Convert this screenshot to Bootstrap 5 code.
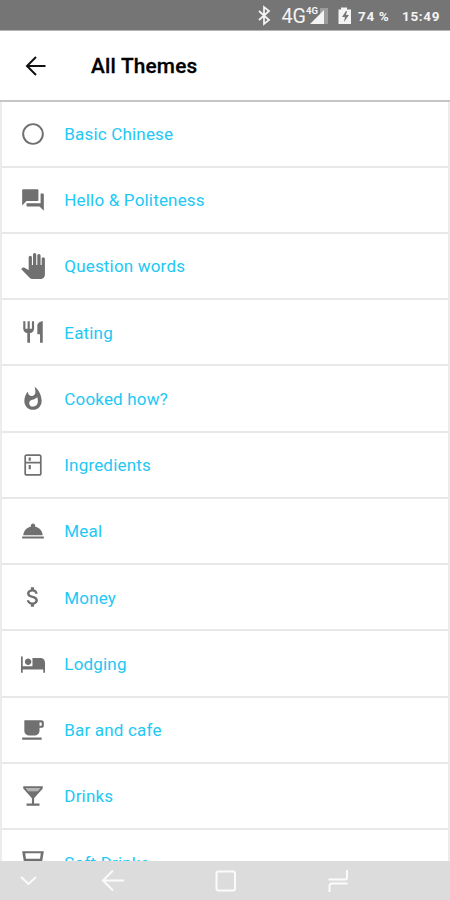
<!DOCTYPE html>
<html lang="en">
<head>
<meta charset="utf-8">
<meta name="viewport" content="width=device-width, initial-scale=1">
<title>All Themes</title>
<link href="https://cdn.jsdelivr.net/npm/bootstrap@5.3.0/dist/css/bootstrap.min.css" rel="stylesheet">
<style>
body{font-family:Roboto,sans-serif;height:900px;background:#fff}
.status{height:30px;background:#757575;color:#f4f4f4;font-size:13.5px;font-weight:700;padding-right:10px}
.status svg,.softkeys svg,.theme svg{flex:none;display:block}
.pct{width:44px;letter-spacing:.65px;white-space:nowrap;padding-top:3px}
.clock{width:38px;letter-spacing:.65px;white-space:nowrap;padding-top:3px}
.topbar{height:72px;padding-left:22px;border-top:1px solid #b5b5b5;border-bottom:2px solid #c6c6c6}
.topbar h1{font-size:20.8px;letter-spacing:.2px;font-weight:500;-webkit-text-stroke:.3px #000;color:#000;margin-left:41px;padding-top:2px}
.themes{border-left:2px solid #ececee;border-right:2px solid #ececee}
.theme{height:66.27px;flex:none;border-bottom:2px solid #e8e8ea;padding-left:18px;color:#22c8f4;font-size:17px;letter-spacing:.18px}
.theme:first-child{height:65.6px}
.theme span{padding-top:2px}
.theme svg{width:26px;height:26px;fill:#707070;margin-right:18.3px}
.softkeys{height:39px;background:#dcdcdc}
.softkeys svg{fill:none;stroke:#fbfbfb;stroke-width:2}
</style>
<script src="https://cdn.jsdelivr.net/npm/bootstrap@5.3.0/dist/js/bootstrap.bundle.min.js"></script>
</head>
<body class="d-flex flex-column overflow-hidden">
<header class="flex-shrink-0">
  <div class="status d-flex align-items-center justify-content-end">
    <svg width="108" height="30" viewBox="0 0 108 30" fill="#f4f4f4" font-family="Roboto,sans-serif">
      <path d="M9 11l10 9-5 4V7l5 4-10 9" fill="none" stroke="#f4f4f4" stroke-width="1.800"/>
      <text x="31.500" y="23" font-size="20.500" font-weight="400" textLength="24.500" lengthAdjust="spacingAndGlyphs">4G</text>
      <text x="56" y="14" font-size="9.500" font-weight="700" textLength="12" lengthAdjust="spacingAndGlyphs">4G</text>
      <path d="M70 8h8v16h-8z" fill="#9c9c9c"/><path d="M74 10v14H60z"/>
      <path fill-rule="evenodd" d="M91 7.500h6v2h4V24H88.500V9.500H91zM96 11l-4 6h3l-1 5 5-7h-3l1-4z"/>
    </svg>
    <span class="pct">74 %</span><span class="clock">15:49</span>
  </div>
  <div class="topbar d-flex align-items-center">
    <svg width="28" height="28" viewBox="0 0 28 28" fill="none" stroke="#111" stroke-width="2"><path d="M23.500 14H6M14 5L5 14l9 9"/></svg>
    <h1 class="mb-0">All Themes</h1>
  </div>
</header>
<main class="themes d-flex flex-column flex-grow-1 overflow-hidden">
  <div class="theme d-flex align-items-center"><svg viewBox="0 0 24 24"><path d="M12 2C6.480 2 2 6.480 2 12s4.480 10 10 10 10-4.480 10-10S17.520 2 12 2zm0 18.200a8.200 8.200 0 1 1 0-16.400 8.200 8.200 0 0 1 0 16.400z"/></svg><span>Basic Chinese</span></div>
  <div class="theme d-flex align-items-center"><svg viewBox="0 0 24 24"><path d="M21 6h-2v9H6v2c0 .55.45 1 1 1h11l4 4V7c0-.55-.45-1-1-1zm-4 6V3c0-.55-.45-1-1-1H3c-.55 0-1 .45-1 1v14l4-4h10c.55 0 1-.45 1-1z"/></svg><span>Hello &amp; Politeness</span></div>
  <div class="theme d-flex align-items-center"><svg viewBox="0 0 24 24"><path d="M23 5.500V20c0 2.200-1.800 4-4 4h-7.300c-1.080 0-2.100-.43-2.850-1.190L1 14.830s1.260-1.230 1.300-1.250c.22-.19.49-.29.79-.29.22 0 .42.06.6.16.04.010 4.310 2.460 4.310 2.460V4c0-.83.67-1.500 1.500-1.500S11 3.170 11 4v7h1V1.500c0-.83.67-1.500 1.500-1.500S15 .67 15 1.500V11h1V2.500c0-.83.67-1.500 1.500-1.500s1.500.67 1.500 1.500V11h1V5.500c0-.83.67-1.500 1.500-1.500s1.500.67 1.500 1.500z"/></svg><span>Question words</span></div>
  <div class="theme d-flex align-items-center"><svg viewBox="0 0 24 24"><path d="M11 9H9V2H7v7H5V2H3v7c0 2.120 1.660 3.840 3.750 3.970V22h2.500v-9.030C11.340 12.840 13 11.120 13 9V2h-2v7zm5-3v8h2.500v8H21V2c-2.760 0-5 2.240-5 4z"/></svg><span>Eating</span></div>
  <div class="theme d-flex align-items-center"><svg viewBox="0 0 24 24"><path d="M13.500.67s.74 2.650.74 4.800c0 2.060-1.350 3.730-3.410 3.730-2.070 0-3.630-1.670-3.630-3.730l.03-.36C5.210 7.510 4 10.620 4 14c0 4.420 3.580 8 8 8s8-3.580 8-8C20 8.610 17.410 3.800 13.500.67zM11.710 19c-1.780 0-3.220-1.400-3.220-3.140 0-1.620 1.050-2.760 2.810-3.120 1.770-.36 3.600-1.210 4.620-2.580.39 1.290.59 2.650.59 4.040 0 2.650-2.150 4.800-4.800 4.800z"/></svg><span>Cooked how?</span></div>
  <div class="theme d-flex align-items-center"><svg viewBox="0 0 24 24"><path d="M18 2.010L6 2c-1.100 0-2 .89-2 2v16c0 1.100.9 2 2 2h12c1.100 0 2-.9 2-2V4c0-1.110-.9-1.990-2-1.990zM18.400 20.400H5.600v-9.800h12.800zM18.400 9H5.600V3.600h12.800zM8 5h2v3H8zm0 7h2v4H8z"/></svg><span>Ingredients</span></div>
  <div class="theme d-flex align-items-center"><svg viewBox="0 0 24 24"><path d="M2 17h20v2H2zm11.840-9.210c.1-.24.160-.51.160-.79 0-1.100-.9-2-2-2s-2 .9-2 2c0 .28.060.55.160.79C6.250 8.600 3.270 11.930 3 16h18c-.27-4.070-3.250-7.400-7.160-8.210z"/></svg><span>Meal</span></div>
  <div class="theme d-flex align-items-center"><svg viewBox="0 0 24 24"><path d="M11.800 10.900c-2.270-.59-3-1.200-3-2.150 0-1.090 1.010-1.850 2.700-1.850 1.780 0 2.440.85 2.500 2.100h2.210c-.07-1.720-1.120-3.300-3.210-3.810V3h-3v2.160c-1.940.42-3.500 1.680-3.500 3.610 0 2.310 1.910 3.460 4.700 4.130 2.500.6 3 1.480 3 2.410 0 .69-.49 1.790-2.700 1.790-2.060 0-2.870-.92-2.980-2.100h-2.200c.12 2.190 1.760 3.420 3.680 3.830V21h3v-2.150c1.950-.37 3.500-1.500 3.500-3.550 0-2.840-2.430-3.810-4.700-4.400z"/></svg><span>Money</span></div>
  <div class="theme d-flex align-items-center"><svg viewBox="0 0 24 24"><path d="M7.500 13c1.660 0 3-1.340 3-3s-1.340-3-3-3-3 1.340-3 3 1.340 3 3 3zM19.500 6.500h-8v7.500h-9V5h-1.600v15h1.600v-3h19v3h1.600v-9c0-2.500-1.400-4.500-3.600-4.500z"/></svg><span>Lodging</span></div>
  <div class="theme d-flex align-items-center"><svg viewBox="0 0 24 24"><path d="M20 3H4v10c0 2.210 1.790 4 4 4h6c2.210 0 4-1.790 4-4v-3h2c1.110 0 2-.89 2-2V5c0-1.110-.89-2-2-2zm0 5h-2V5h2v3zM2 21h18v-2H2v2z"/></svg><span>Bar and cafe</span></div>
  <div class="theme d-flex align-items-center"><svg viewBox="0 0 24 24"><path fill="#b5b5b5" d="M5 4h14l-2 4H7z"/><path d="M21 5V3H3v2l8 9v5H6v2h12v-2h-5v-5l8-9zM7.430 7.500L5.200 4.600h13.600l-2.230 2.900H7.430z"/></svg><span>Drinks</span></div>
  <div class="theme d-flex align-items-center"><svg viewBox="0 0 24 24"><path d="M2 2l3 18.230C5.130 21.230 5.970 22 7 22h10c1.030 0 1.870-.77 1.990-1.770L22 2H2zm16.500 7H5.500l-.7-5h14.400l-.7 5z"/></svg><span>Soft Drinks</span></div>
</main>
<footer class="softkeys flex-shrink-0">
  <svg width="450" height="39" viewBox="0 0 450 39"><path d="M21 16l7.500 7L36 16M124 19.500h-20M113 9.500l-10 10 10 10"/><rect x="216.500" y="10.500" width="18.500" height="19" rx="2"/><path d="M347 9v7.500q0 2-2 2h-16.500M329.500 31v-6q0-2.500 2.500-2.500h15.500"/></svg>
</footer>
</body>
</html>
